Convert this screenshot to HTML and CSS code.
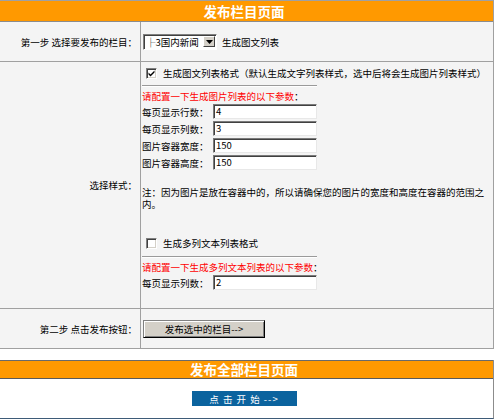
FILE: index.html
```html
<!DOCTYPE html>
<html>
<head>
<meta charset="utf-8">
<link rel="stylesheet" href="styles.css">
</head>
<body>
<div class="panel">
  <div class="head">发布栏目页面</div>
  <div class="row r1">
    <div class="lbl">第一步 选择要发布的栏目：</div>
    <div class="cnt c1">
      <div class="sel"><span class="seltext">├3国内新闻</span><span class="arrow"><svg width="7" height="4" viewBox="0 0 7 4"><path d="M0 0H7L3.5 4Z" fill="#000"/></svg></span></div>
      <span class="after">生成图文列表</span>
    </div>
  </div>
  <div class="row r2">
    <div class="lbl">选择样式：</div>
    <div class="cnt c2">
      <div class="cbline"><span class="cb"><svg width="9" height="9" viewBox="0 0 9 9"><path d="M1.5 3.5L3.5 5.5L7.5 1.5V3.5L3.5 7.5L1.5 5.5Z" fill="#000"/></svg></span>生成图文列表格式（默认生成文字列表样式，选中后将会生成图片列表样式）</div>
      <div class="rule"></div>
      <div class="tip"><span class="red">请配置一下生成图片列表的以下参数</span>：</div>
      <div class="params">
        <div class="prow"><span class="plbl">每页显示行数：</span><span class="inp">4</span></div>
        <div class="prow"><span class="plbl">每页显示列数：</span><span class="inp">3</span></div>
        <div class="prow"><span class="plbl">图片容器宽度：</span><span class="inp">150</span></div>
        <div class="prow"><span class="plbl">图片容器高度：</span><span class="inp">150</span></div>
      </div>
      <div class="note">注：因为图片是放在容器中的，所以请确保您的图片的宽度和高度在容器的范围之内。</div>
      <div class="cbline cb2"><span class="cb"></span>生成多列文本列表格式</div>
      <div class="rule rule2"></div>
      <div class="tip"><span class="red">请配置一下生成多列文本列表的以下参数</span>：</div>
      <div class="params">
        <div class="prow"><span class="plbl">每页显示列数：</span><span class="inp">2</span></div>
      </div>
    </div>
  </div>
  <div class="row r3">
    <div class="lbl">第二步 点击发布按钮：</div>
    <div class="cnt c3"><span class="btn">发布选中的栏目--&gt;</span></div>
  </div>
</div>
<div class="panel2">
  <div class="head2">发布全部栏目页面</div>
  <div class="body2"><span class="bluebtn">点 击 开 始 --&gt;</span></div>
</div>
</body>
</html>
```
FILE: styles.css
```css
html, body {
  margin: 0;
  padding: 0;
  background: #fff;
  font-family: "Noto Sans CJK SC", "Noto Sans", sans-serif;
  font-size: 9.5px;
  color: #000;
  overflow: hidden;
}
.panel {
  width: 500px;
  box-sizing: border-box;
  margin-left: -6px;
  border: 1px solid #a0a0a0;
  background: #f4f4f4;
}
.head {
  height: 20px;
  background: #ff9900;
  border-bottom: 1px solid #8c8c8c;
  color: #fff;
  font-weight: bold;
  font-size: 13.5px;
  line-height: 20px;
  text-align: center;
}
.row {
  display: grid;
  grid-template-columns: 146px 1fr;
  border-bottom: 1px solid #a0a0a0;
}
.row.r3 { border-bottom: none; }
.r1 { height: 39px; }
.r2 { height: 246px; }
.r3 { height: 39px; }
.lbl {
  border-right: 1px solid #a0a0a0;
  display: flex;
  align-items: center;
  justify-content: flex-end;
  padding-right: 3px;
  line-height: 12px;
}
.cnt {
  padding-left: 1px;
  line-height: 12px;
}
.c1, .c3 {
  display: flex;
  align-items: center;
}
.sel {
  margin-left: 1px;
  width: 74px;
  height: 16px;
  box-sizing: border-box;
  background: #fff;
  border: 1px solid;
  border-color: #808080 #fff #fff #808080;
  box-shadow: inset 1px 1px 0 #404040;
  display: flex;
  align-items: center;
  padding: 1px 1px 1px 2px;
}
.seltext {
  flex: 1;
  white-space: nowrap;
  overflow: hidden;
  line-height: 12px;
}
.arrow {
  width: 12px;
  height: 11px;
  box-sizing: border-box;
  background: #d4d0c8;
  border: 1px solid;
  border-color: #fff #404040 #404040 #fff;
  display: flex;
  align-items: center;
  justify-content: center;
}
.after { margin-left: 5px; }
.c2 { padding-top: 5px; box-sizing: border-box; }
.cbline {
  height: 12px;
  display: flex;
  align-items: center;
  white-space: nowrap;
}
.cb {
  width: 11px;
  height: 11px;
  box-sizing: border-box;
  margin-left: 4px;
  margin-right: 6px;
  background: #fff;
  border: 1px solid;
  border-color: #808080 #fff #fff #808080;
  box-shadow: inset 1px 1px 0 #404040, inset -1px -1px 0 #d4d0c8;
  display: flex;
  align-items: center;
  justify-content: center;
}
.rule {
  width: 175px;
  height: 0;
  border-top: 1px solid #9a9a9a;
  border-bottom: 1px solid #fff;
  margin-top: 6px;
  margin-bottom: 3px;
}
.rule2 { margin-top: 7px; }
.tip { height: 12px; white-space: nowrap; }
.red { color: #ff0000; }
.params { margin-top: 1px; }
.prow {
  height: 17px;
  display: flex;
  align-items: center;
}
.plbl { width: 71px; white-space: nowrap; }
.inp {
  width: 104px;
  height: 15px;
  box-sizing: border-box;
  background: #fff;
  border: 1px solid;
  border-color: #7a7a7a #e8e8e8 #e8e8e8 #7a7a7a;
  box-shadow: inset 1px 1px 0 #404040;
  padding-left: 2px;
  line-height: 13px;
}
.note {
  margin-top: 15px;
  max-width: 342px;
}
.cb2 { margin-top: 27px; }
.btn {
  margin-left: 1px;
  width: 122px;
  height: 18px;
  box-sizing: border-box;
  background: #d4d0c8;
  border: 1px solid;
  border-color: #808080 #000 #000 #808080;
  box-shadow: inset 1px 1px 0 #fff, inset -1px -1px 0 #808080;
  display: flex;
  align-items: center;
  justify-content: center;
  line-height: 12px;
}
.panel2 {
  width: 500px;
  box-sizing: border-box;
  margin-left: -6px;
  margin-top: 11px;
  border-left: 1px solid #8c8c8c;
  border-right: 1px solid #8c8c8c;
  border-bottom: 1px solid #3e5b78;
  background: #fff;
}
.head2 {
  height: 17px;
  background: #ff9900;
  border-top: 1px solid #6a6a6a;
  border-bottom: 1px solid #5a5a5a;
  color: #fff;
  font-weight: bold;
  font-size: 13.5px;
  line-height: 17px;
  text-align: center;
}
.body2 {
  height: 39px;
  display: flex;
  align-items: center;
  justify-content: center;
}
.bluebtn {
  width: 105px;
  height: 15px;
  background: #0b639e;
  color: #fff;
  display: flex;
  align-items: center;
  justify-content: center;
  letter-spacing: 1px;
  line-height: 12px;
}
```
